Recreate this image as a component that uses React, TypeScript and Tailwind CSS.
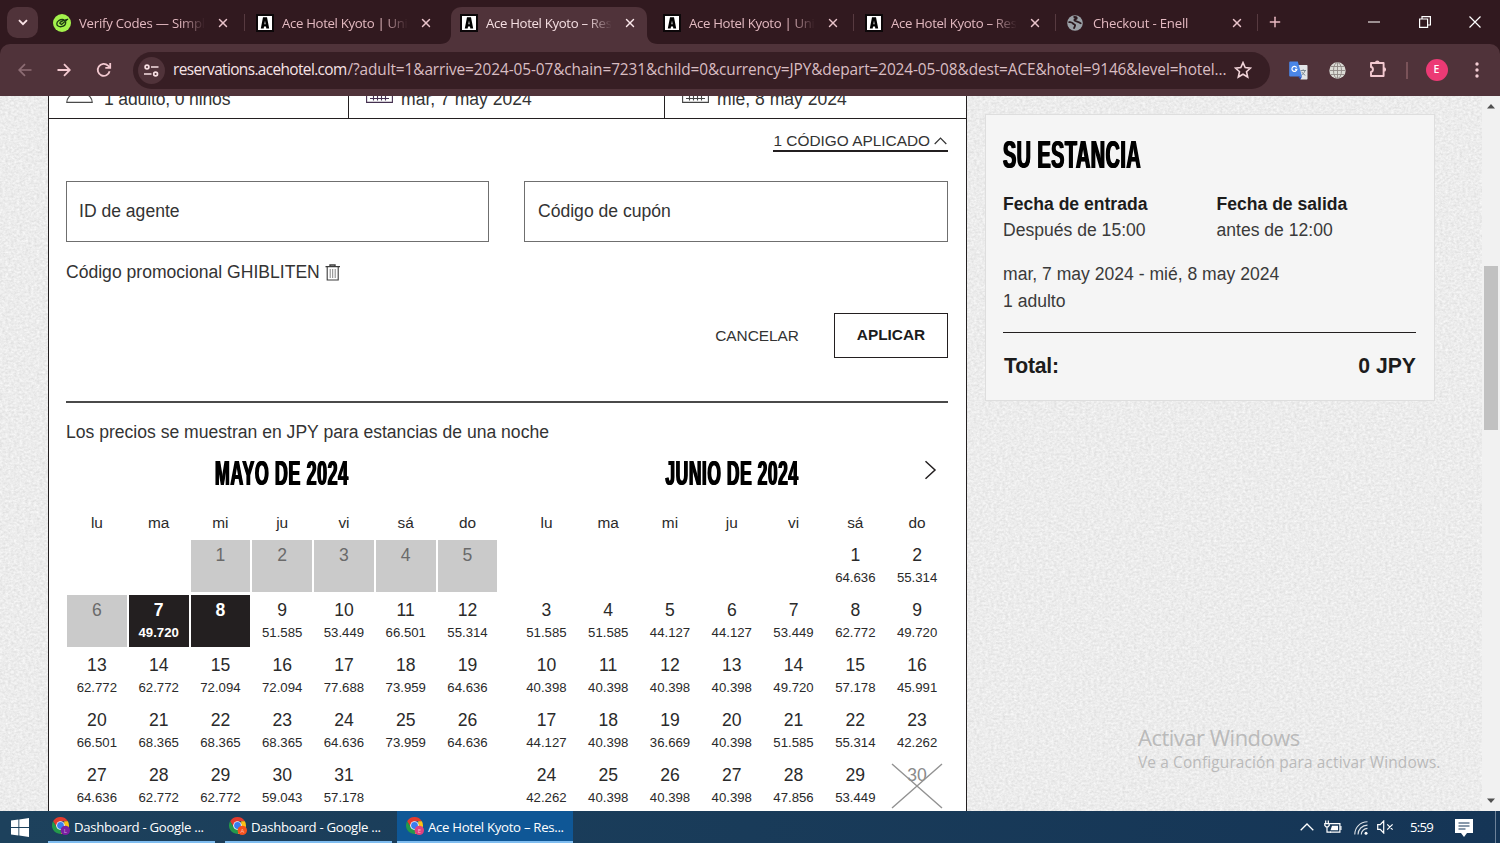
import React from 'react';
import { X, Plus } from 'lucide-react';

const SEGOE = "font-['Open_Sans','Noto_Sans',sans-serif]";

/* ---------- Icons ---------- */

function VerifyIcon() {
  return (
    <svg width="18" height="18" viewBox="0 0 18 18">
      <circle cx="9" cy="9" r="9" fill="#a4f24c" />
      <g fill="none" stroke="#1c3a12" strokeWidth="1.3" strokeLinecap="round" strokeLinejoin="round">
        <path d="M10.500 5.600C7 5 3.800 7.200 3.800 9.700c0 2 2 3.300 4.400 3 3-.4 4.600-2.600 4.500-4.700" />
        <path d="M6.800 9.300l1.700 1.300L14.600 5.300l-4.600 1.300-3 1.800" />
      </g>
    </svg>
  );
}

function AceIcon() {
  return (
    <svg width="18" height="18" viewBox="0 0 18 18">
      <rect width="18" height="18" fill="#0c0709" />
      <rect x="2" y="2" width="14" height="14" fill="#fff" />
      <path d="M7 3.200h4l2.200 11.300h-2.900l-.3-2.100H8l-.3 2.100H4.800zM9 6.400l-.6 3.800h1.200z" fill="#000" />
    </svg>
  );
}

function GlobeIcon() {
  return (
    <svg width="16" height="16" viewBox="0 0 16 16">
      <circle cx="8" cy="8" r="7.800" fill="#9aa0a6" />
      <path
        d="M6.500 2.200c1.800-.4 3.500 0 3.200 1-.2.900-1.800.7-2.200 1.500-.4.900.8 1.300 2 1.600 1.600.4 3.600 1 4.700 2.500M1.500 6.800c1.600.5 3.600.4 4.300 1.500.6 1 1.800.9 2.200 1.700.5 1.100-.9 1.800-1 3.800"
        fill="none"
        stroke="#2c1a1f"
        strokeWidth="1.900"
      />
    </svg>
  );
}

function TranslateIcon() {
  return (
    <svg width="19" height="19" viewBox="0 0 19 19">
      <path d="M8 4h9.500c.6 0 1 .4 1 1v12.500c0 .6-.4 1-1 1H11.500z" fill="#e3e5e8" />
      <path d="M11.500 9.500h5.500M14.200 8.300v1.200M16 9.700c-.6 2-2 3.600-3.600 4.600M12.700 10.800c.8 1.600 2 2.700 3.600 3.500" stroke="#7d8a94" strokeWidth="1" fill="none" />
      <path d="M1.200.5h7.600l4.200 15H1.200a1 1 0 0 1-1-1v-13a1 1 0 0 1 1-1z" fill="#4a86e8" />
      <path d="M9 15.500h4l-1.500 3z" fill="#2a56c6" />
      <path d="M7.600 6.600A2.500 2.500 0 1 0 7.900 8.400H6" stroke="#fff" strokeWidth="1.200" fill="none" />
    </svg>
  );
}

function GridGlobeIcon() {
  return (
    <svg width="17" height="17" viewBox="0 0 17 17">
      <circle cx="8.500" cy="8.500" r="8.200" fill="#dcdcd6" />
      <g fill="none" stroke="#8d8783" strokeWidth=".9">
        <ellipse cx="8.500" cy="8.500" rx="4" ry="8" />
        <path d="M8.500.5v16M.5 8.500h16M1.800 4.500h13.400M1.800 12.500h13.400" />
      </g>
    </svg>
  );
}

function PuzzleIcon() {
  return (
    <svg width="20" height="20" viewBox="0 0 20 20">
      <path
        d="M3 4h12.600v13H3v-4c2.600-.4 2.600-4.600 0-5z"
        fill="none"
        stroke="#f3c9d0"
        strokeWidth="1.900"
        strokeLinejoin="round"
      />
      <path d="M7 3.800a2.300 2.300 0 0 1 4.600 0zM15.800 8.200a2.300 2.300 0 0 1 0 4.600z" fill="#f3c9d0" />
    </svg>
  );
}

function ChromeIcon({ badge, letter }: { badge: string; letter: string }) {
  return (
    <svg width="20" height="20" viewBox="0 0 20 20">
      <path d="M8.500 0A8.500 8.500 0 0 1 15.900 4.300H8.500L4.900 10.600 1.100 4.300A8.500 8.500 0 0 1 8.500 0z" fill="#e33b2e" />
      <path d="M15.900 4.300A8.500 8.500 0 0 1 8.500 17l3.700-6.400V4.300z" fill="#fbc116" />
      <path d="M1.100 4.300A8.500 8.500 0 0 0 8.500 17l3.700-6.400H4.900z" fill="#24994a" />
      <circle cx="8.500" cy="8.500" r="4.300" fill="#fff" />
      <circle cx="8.500" cy="8.500" r="3.400" fill="#3a7ded" />
      <circle cx="13.300" cy="13.400" r="4.700" fill={badge} />
      <text x="13.300" y="15.500" fontSize="6" textAnchor="middle" fill="#fff" fillOpacity=".6" fontFamily="Open Sans">
        {letter}
      </text>
    </svg>
  );
}

function CalendarBottomIcon({ color }: { color: string }) {
  return (
    <svg width="27" height="24" viewBox="0 0 27 24" fill="none" stroke={color} strokeWidth="1.100">
      <path d="M.6 3.500h25.800v19.900H.6zM.6 9h25.800M4 19.500h19M4 15h19M7.500 11v10.500M11.500 11v10.500M15.500 11v10.500M19.500 11v10.500" />
    </svg>
  );
}

function PersonIcon() {
  return (
    <svg width="27" height="26" viewBox="0 0 27 26" fill="none" stroke="#4a4a4a" strokeWidth="1.200">
      <circle cx="13.500" cy="7" r="6" />
      <path d="M.8 25.300c0-4 3-8 8-8h9.400c5 0 8 4 8 8z" />
    </svg>
  );
}

function TrashIcon() {
  return (
    <svg width="16" height="17" viewBox="0 0 16 17" fill="none" stroke="#3c3c3c" strokeWidth="1.100">
      <path d="M.5 2.600h14.500M5 2.400V1h5v1.400" strokeWidth="1.400" />
      <path d="M2.200 3v13h11V3" />
      <path d="M5.200 5v9M7.700 5v9M10.200 5v9" stroke="#777" strokeWidth=".9" />
    </svg>
  );
}

/* ---------- Browser chrome ---------- */

interface TabInfo {
  title: string;
  icon: React.ReactNode;
  active?: boolean;
  divider?: boolean;
  style: string;
}

const tabs: TabInfo[] = [
  { title: 'Verify Codes — Simply', icon: <VerifyIcon />, divider: true, style: 'w-[203px] tracking-[-0.240px]' },
  { title: 'Ace Hotel Kyoto | Unit', icon: <AceIcon />, style: 'w-[204px] tracking-[-0.330px]' },
  { title: 'Ace Hotel Kyoto – Rese', icon: <AceIcon />, active: true, style: 'w-[203px] tracking-[-0.330px]' },
  { title: 'Ace Hotel Kyoto | Unit', icon: <AceIcon />, divider: true, style: 'w-[202px] tracking-[-0.330px]' },
  { title: 'Ace Hotel Kyoto – Rese', icon: <AceIcon />, divider: true, style: 'w-[202px] tracking-[-0.330px]' },
  { title: 'Checkout - Enell', icon: <GlobeIcon />, divider: true, style: 'w-[202px] tracking-[-0.200px]' },
];

function Tab({ tab }: { tab: TabInfo }) {
  return (
    <div className={`relative h-[44px] shrink-0 pt-[7px] ${tab.style}`}>
      {tab.active && (
        <svg className="absolute top-[7px] -left-[9px]" width="220" height="37" viewBox="0 0 220 37">
          <path d="M0 37c7 0 11-4 11-10V11C11 4 15 0 22 0h174c7 0 11 4 11 11v16c0 6 4 10 11 10z" fill="#50333a" />
        </svg>
      )}
      <div className="relative flex h-[32px] items-center pl-[11px]">
        <div className="flex w-[26px] items-center">{tab.icon}</div>
        <div
          className={`w-[125px] overflow-hidden text-[13.200px] leading-[20px] whitespace-nowrap [mask-image:linear-gradient(to_right,#000_101px,transparent_126px)] ${
            tab.active ? 'text-[#f5dfe2]' : 'text-[#e3b9c0]'
          }`}
        >
          {tab.title}
        </div>
        <X className={`ml-[12px] ${tab.active ? 'text-[#fbe9eb]' : 'text-[#e9c3ca]'}`} size={14} strokeWidth={2.5} />
      </div>
      {tab.divider && <div className="absolute top-[14px] right-[0px] h-[17px] w-[1.500px] bg-[#573a40]" />}
    </div>
  );
}

function TabStrip() {
  return (
    <div className="flex h-[44px] items-start bg-[#31191f]">
      <div className="w-[42px] shrink-0 pt-[7px] pl-[7px]">
        <div className="flex h-[31px] w-[31px] items-center justify-center rounded-[10px] bg-[#50333a]">
          <svg width="10" height="7" viewBox="0 0 10 7" fill="none" stroke="#fbe4e7" strokeWidth="1.900">
            <path d="M1 1.200l4 4 4-4" />
          </svg>
        </div>
      </div>
      {tabs.map((t, i) => (
        <Tab key={i} tab={t} />
      ))}
      <div className="flex h-[44px] flex-1 items-center">
        <Plus className="ml-[9px] text-[#e9b9c2]" size={16} strokeWidth={2.2} />
        <div className="ml-auto flex items-center text-white">
          <svg width="12" height="2" viewBox="0 0 12 2">
            <path d="M0 1h12" stroke="#e6dfe0" strokeWidth="1.200" />
          </svg>
          <svg className="ml-[39px]" width="12" height="12" viewBox="0 0 12 12" fill="none" stroke="#fff" strokeWidth="1.200">
            <path d="M.6 3h8v8.400h-8zM3 3V.6h8.400V9H8.800" />
          </svg>
          <svg className="mr-[19px] ml-[38px]" width="12" height="12" viewBox="0 0 12 12" fill="none" stroke="#fff" strokeWidth="1.200">
            <path d="M.5.5l11 11M11.500.5l-11 11" />
          </svg>
        </div>
      </div>
    </div>
  );
}

function Toolbar() {
  return (
    <div className="bg-[#31191f]">
      <div className="flex h-[52px] items-center rounded-t-[10px] bg-[#50333a]">
        <svg className="ml-[18px]" width="14" height="14" viewBox="0 0 14 14" fill="none" stroke="#8d6d74" strokeWidth="1.700">
          <path d="M13.500 7H1.500M7 1.200L1.200 7 7 12.800" />
        </svg>
        <svg className="ml-[25px]" width="14" height="14" viewBox="0 0 14 14" fill="none" stroke="#f3c9d0" strokeWidth="1.800">
          <path d="M.5 7h12M7 1.200L12.800 7 7 12.800" />
        </svg>
        <svg className="ml-[25px]" width="16" height="16" viewBox="0 0 16 16" fill="none" stroke="#f3c9d0" strokeWidth="1.800">
          <path d="M13.600 9.200A6 6 0 1 1 12 3.600l1.600 1.600" />
          <path d="M14.200 1v4.900H9.300" />
        </svg>
        <div className="ml-[21px] flex h-[37px] w-[1137px] items-center rounded-full bg-[#371e24]">
          <div className="ml-[5px] flex h-[27px] w-[27px] items-center justify-center rounded-full bg-[#50333a]">
            <svg width="15" height="13" viewBox="0 0 15 13" fill="none" stroke="#f6dfe2" strokeWidth="1.700">
              <circle cx="3" cy="3" r="1.900" />
              <path d="M7 3h7.500M0 10h7.500" />
              <circle cx="11.600" cy="10" r="1.900" />
            </svg>
          </div>
          <div className="ml-[8px] flex w-[1055px] text-[15.400px] leading-[22px] whitespace-nowrap">
            <span className="w-[174.500px] shrink-0 tracking-[-0.620px] text-[#f6e3e6]">reservations.acehotel.com</span>
            <span className="tracking-[-0.100px] text-[#d9bdc2]">
              /?adult=1&amp;arrive=2024-05-07&amp;chain=7231&amp;child=0&amp;currency=JPY&amp;depart=2024-05-08&amp;dest=ACE&amp;hotel=9146&amp;level=hotel...
            </span>
          </div>
          <svg className="ml-[6px]" width="18" height="18" viewBox="0 0 18 18" fill="none" stroke="#f0d3d8" strokeWidth="1.600">
            <path d="M9 1.600l2.200 5 5.300.5-4 3.600 1.200 5.300L9 13.200 4.300 16l1.200-5.300-4-3.600 5.300-.5z" />
          </svg>
        </div>
        <div className="ml-[19px] flex items-center">
          <TranslateIcon />
          <div className="ml-[21px]">
            <GridGlobeIcon />
          </div>
          <div className="-mt-[2px] ml-[22px]">
            <PuzzleIcon />
          </div>
          <div className="ml-[18px] h-[17px] w-[1.500px] bg-[#7a5359]" />
          <div className="ml-[18px] flex h-[22px] w-[22px] items-center justify-center rounded-full bg-[#ec3a75] text-[10.500px] font-semibold text-white">
            E
          </div>
          <svg className="ml-[27px]" width="4" height="16" viewBox="0 0 4 16" fill="#f3cdd3">
            <circle cx="2" cy="2" r="1.700" />
            <circle cx="2" cy="8" r="1.700" />
            <circle cx="2" cy="14" r="1.700" />
          </svg>
        </div>
      </div>
    </div>
  );
}

/* ---------- Calendar ---------- */

interface Day {
  n: number;
  price?: string;
  kind?: 'past' | 'selected' | 'crossed';
}

const weekdays = ['lu', 'ma', 'mi', 'ju', 'vi', 'sá', 'do'];

const mayPrices =
  '51.585 53.449 66.501 55.314 62.772 62.772 72.094 72.094 77.688 73.959 64.636 66.501 68.365 68.365 68.365 64.636 73.959 64.636 64.636 62.772 62.772 59.043 57.178'.split(' ');
const may: Day[] = [
  ...[1, 2, 3, 4, 5, 6].map((n): Day => ({ n, kind: 'past' })),
  { n: 7, price: '49.720', kind: 'selected' },
  { n: 8, kind: 'selected' },
  ...mayPrices.map((price, i): Day => ({ n: i + 9, price })),
];

const junePrices =
  '64.636 55.314 51.585 51.585 44.127 44.127 53.449 62.772 49.720 40.398 40.398 40.398 40.398 49.720 57.178 45.991 44.127 40.398 36.669 40.398 51.585 55.314 42.262 42.262 40.398 40.398 40.398 47.856 53.449'.split(' ');
const june: Day[] = [...junePrices.map((price, i): Day => ({ n: i + 1, price })), { n: 30, kind: 'crossed' }];

function DayCell({ day }: { day: Day }) {
  const tone =
    day.kind === 'past'
      ? 'bg-[#cacaca] text-[#6a6a6a]'
      : day.kind === 'selected'
        ? 'bg-[#231f20] text-white font-bold'
        : day.kind === 'crossed'
          ? 'text-[#8a8a8a]'
          : 'text-[#2a2a2a]';
  return (
    <div className="h-[55px] p-[1px] pb-[2px]">
      <div className={`relative flex h-[52px] flex-col items-center pt-[5px] ${tone}`}>
        <span className="text-[17.570px] leading-[21px]">{day.n}</span>
        <span className="mt-[3px] text-[13.200px] leading-[18px]">{day.price}</span>
        {day.kind === 'crossed' && (
          <svg className="absolute top-[3px] left-[4px]" width="52" height="46" viewBox="0 0 52 46" stroke="#929292" strokeWidth="1.400">
            <path d="M1 1l50 44M51 1L1 45" />
          </svg>
        )}
      </div>
    </div>
  );
}

function Month({ title, scale, days, offset, hasNext }: { title: string; scale: string; days: Day[]; offset: number; hasNext?: boolean }) {
  return (
    <div className="w-[432.400px] shrink-0">
      <div className="relative flex h-[40px] items-center justify-center">
        <h2
          className={`text-[35.500px] leading-[40px] font-bold tracking-[1.200px] whitespace-nowrap text-black [text-shadow:1.200px_0_0_#000,-1.200px_0_0_#000] ${scale}`}
        >
          {title}
        </h2>
        {hasNext && (
          <svg className="absolute top-[7px] right-[11px]" width="13" height="20" viewBox="0 0 13 20" fill="none" stroke="#231f20" strokeWidth="1.500">
            <path d="M1.500 1.200L11 10l-9.500 8.800" />
          </svg>
        )}
      </div>
      <div className="mt-[20px] grid grid-cols-7 text-center text-[15.400px] leading-[20px] text-[#2a2a2a]">
        {weekdays.map((d) => (
          <div key={d}>{d}</div>
        ))}
      </div>
      <div className="mt-[6px] grid grid-cols-7">
        {Array.from({ length: offset }, (_, i) => (
          <div key={`e${i}`} />
        ))}
        {days.map((d) => (
          <DayCell key={d.n} day={d} />
        ))}
      </div>
    </div>
  );
}

/* ---------- Booking panel ---------- */

function BookingPanel() {
  return (
    <main className="h-[715px] w-[919px] shrink-0 overflow-hidden border-x border-[#231f20] bg-white text-[17.570px] text-[#333]">
      <div className="flex h-[23px] items-end overflow-hidden border-b border-[#231f20]">
        <div className="flex h-[60px] w-[300px] shrink-0 items-end border-r border-[#231f20] pb-[8px] pl-[17px]">
          <div className="pb-[7px]">
            <PersonIcon />
          </div>
          <span className="ml-[11px] leading-[22px] tracking-[-0.150px]">1 adulto, 0 niños</span>
        </div>
        <div className="flex h-[60px] w-[316px] shrink-0 items-end border-r border-[#231f20] pb-[8px] pl-[17px]">
          <div className="pb-[7px]">
            <CalendarBottomIcon color="#44304f" />
          </div>
          <span className="ml-[8px] leading-[22px]">mar, 7 may 2024</span>
        </div>
        <div className="flex h-[60px] flex-1 items-end pb-[8px] pl-[17px]">
          <div className="pb-[7px]">
            <CalendarBottomIcon color="#444" />
          </div>
          <span className="ml-[8px] leading-[22px]">mié, 8 may 2024</span>
        </div>
      </div>

      <div className="flex flex-col pr-[18px] pl-[17px]">
        <div className="mt-[12px] flex h-[21px] items-center self-end border-b-2 border-[#231f20] text-[15.400px] leading-[20px]">
          <span>1 CÓDIGO APLICADO</span>
          <svg className="mr-[1px] ml-[4px]" width="13" height="8" viewBox="0 0 13 8" fill="none" stroke="#333" strokeWidth="1.200">
            <path d="M.7 7l5.800-5.800L12.300 7" />
          </svg>
        </div>

        <div className="mt-[29px] grid grid-cols-[423px_424px] gap-[35px]">
          <div className="flex h-[61px] items-center border border-[#6f6f6f] pl-[12px]">ID de agente</div>
          <div className="flex h-[61px] items-center border border-[#6f6f6f] pl-[13px]">Código de cupón</div>
        </div>

        <div className="mt-[17px] flex h-[26px] items-center">
          <span>Código promocional GHIBLITEN</span>
          <div className="ml-[5px]">
            <TrashIcon />
          </div>
        </div>

        <div className="mt-[27px] flex h-[46px] items-center justify-end text-[15.400px]">
          <button className="mr-[35px] pt-[1px]">CANCELAR</button>
          <button className="h-[45px] w-[114px] border border-[#231f20] font-bold text-[#1c1c1c]">APLICAR</button>
        </div>

        <div className="mt-[43px] h-[1.500px] bg-[#4a4a4a]" />

        <p className="mt-[16.500px] leading-[26px]">Los precios se muestran en JPY para estancias de una noche</p>

        <div className="mt-[8px] flex gap-[17.200px]">
          <Month title="MAYO DE 2024" scale="scale-x-[0.504]" days={may} offset={2} />
          <Month title="JUNIO DE 2024" scale="scale-x-[0.490]" days={june} offset={5} hasNext />
        </div>
      </div>
    </main>
  );
}

/* ---------- Stay summary ---------- */

function StaySummary() {
  return (
    <aside className="mt-[18px] ml-[17.500px] h-[287px] w-[450px] shrink-0 border border-[#dedede] bg-[#f5f5f5] px-[17.500px] text-[17.570px] leading-[26.400px] text-[#3a3a3a]">
      <div className="mt-[17px] flex h-[46px] items-center">
        <h2 className="origin-left scale-x-[0.507] text-[39px] leading-[46px] font-bold tracking-[1px] whitespace-nowrap text-black [text-shadow:1.300px_0_0_#000,-1.300px_0_0_#000]">
          SU ESTANCIA
        </h2>
      </div>
      <div className="mt-[13px] flex">
        <div className="w-[213.500px]">
          <div className="font-bold text-[#1c1c1c]">Fecha de entrada</div>
          <div>Después de 15:00</div>
        </div>
        <div>
          <div className="font-bold text-[#1c1c1c]">Fecha de salida</div>
          <div>antes de 12:00</div>
        </div>
      </div>
      <div className="mt-[17.500px]">mar, 7 may 2024 - mié, 8 may 2024</div>
      <div>1 adulto</div>
      <div className="mt-[17.500px] flex justify-between border-t border-[#231f20] pt-[20px] text-[21.200px] font-bold text-[#1c1c1c]">
        <span className="pl-px tracking-[-0.200px]">Total:</span>
        <span>0 JPY</span>
      </div>
    </aside>
  );
}

function Paper() {
  return (
    <svg className="absolute inset-0 h-full w-full" aria-hidden>
      <filter id="grain" x="0" y="0" width="100%" height="100%" colorInterpolationFilters="sRGB">
        <feTurbulence type="fractalNoise" baseFrequency="0.35 0.45" numOctaves="3" seed="4" />
        <feColorMatrix values="0.14 0 0 0 0.855  0.14 0 0 0 0.855  0.14 0 0 0 0.855  0 0 0 0 1" />
      </filter>
      <rect width="100%" height="100%" fill="#ececec" filter="url(#grain)" />
    </svg>
  );
}

function PageView() {
  return (
    <div className="relative h-[715px] overflow-hidden bg-[#ececec] font-['Liberation_Sans',Arial,sans-serif]">
      <Paper />
      <div className="relative flex h-full">
        <div className="w-[48px] shrink-0" />
        <BookingPanel />
        <StaySummary />
        <div className="ml-auto flex h-full w-[18px] flex-col items-center bg-[#f1f1f1]">
          <svg className="mt-[7px]" width="8" height="6" viewBox="0 0 8 6">
            <path d="M0 5.500L4 1l4 4.500z" fill="#505050" />
          </svg>
          <div className="mt-[157px] h-[164px] w-[14px] bg-[#c1c1c1]" />
          <svg className="mt-auto mb-[7px]" width="8" height="6" viewBox="0 0 8 6">
            <path d="M0 .5L4 5l4-4.500z" fill="#505050" />
          </svg>
        </div>
      </div>
      <div className={`absolute top-[626px] left-[1138px] whitespace-nowrap text-[#bababa] ${SEGOE}`}>
        <div className="text-[22px] leading-[30px] tracking-[-0.500px]">Activar Windows</div>
        <div className="text-[15.400px] leading-[21px] tracking-[0.150px]">Ve a Configuración para activar Windows.</div>
      </div>
    </div>
  );
}

/* ---------- Taskbar ---------- */

function TaskItem({ label, badge, letter, active, className }: { label: string; badge: string; letter: string; active?: boolean; className: string }) {
  return (
    <div
      className={`flex h-[32px] shrink-0 items-center border-b-2 border-[#7fbdf0] ${active ? 'bg-[#0f5796] pl-[9px]' : 'pl-[4px]'} ${className}`}
    >
      <div className="w-[22px] shrink-0 pt-[2px]">
        <ChromeIcon badge={badge} letter={letter} />
      </div>
      <span className="pt-px text-[13.200px] leading-[20px] tracking-[-0.300px] whitespace-nowrap text-white">{label}</span>
    </div>
  );
}

function Taskbar() {
  return (
    <div className={`flex h-[32px] items-center bg-gradient-to-r from-[#1d415c] to-[#153556] ${SEGOE}`}>
      <svg className="ml-[11px]" width="18" height="19" viewBox="0 0 18 19" fill="#fff">
        <path d="M0 2.600l7.400-1v7.500H0zM8.300 1.400L18 0v9.100H8.300zM0 9.900h7.400v7.500l-7.400-1zM8.300 9.900H18V19l-9.700-1.400z" />
      </svg>
      <TaskItem className="ml-[19px] w-[167px]" label="Dashboard - Google ..." badge="#7b1fa2" letter="L" />
      <TaskItem className="ml-[10px] w-[167px]" label="Dashboard - Google ..." badge="#f4511e" letter="A" />
      <TaskItem className="ml-[5px] w-[176px]" label="Ace Hotel Kyoto – Res..." badge="#e0407f" letter="E" active />
      <div className="ml-auto flex h-[32px] items-center text-white">
        <svg width="14" height="8" viewBox="0 0 14 8" fill="none" stroke="#fff" strokeWidth="1.300">
          <path d="M.7 7.300L7 1l6.300 6.300" />
        </svg>
        <svg className="ml-[10px]" width="18" height="14" viewBox="0 0 18 14" fill="none" stroke="#fff" strokeWidth="1.200">
          <path d="M5.500 3.600h10.400v8.600H6" />
          <path d="M8 5.700h6v4.600H6.500z" fill="#fff" stroke="none" />
          <path d="M16.900 6v4M1.700.6v2.600M4.300.6v2.600M.8 3.600h4.400v1.800L3.900 6.800H2.100L.8 5.400zM3 7v5.200h4" />
        </svg>
        <svg className="mt-[2px] ml-[12px]" width="14" height="14" viewBox="0 0 14 14" fill="none" stroke="#fff" strokeWidth="1.100">
          <path d="M.8 13.500C.8 6.500 6 1 13.500.8M4 13.500C4 8.500 8 4.300 13.500 4.100M7.300 13.500c0-3.300 2.700-6 6.200-6.100" opacity=".85" />
          <circle cx="12" cy="12.200" r="1.500" fill="#fff" stroke="none" />
        </svg>
        <svg className="ml-[9px]" width="17" height="14" viewBox="0 0 17 14" fill="none" stroke="#fff" strokeWidth="1.200">
          <path d="M.7 4.600h2.500L6.700 1v12L3.200 9.400H.7zM10.200 4.300l5.400 5.400M15.600 4.300l-5.400 5.400" />
        </svg>
        <span className="ml-[16px] w-[24px] pt-px text-[13.200px] tracking-[-0.800px]">5:59</span>
        <svg className="mt-[2px] ml-[21px]" width="18" height="18" viewBox="0 0 18 18">
          <path d="M0 0h18v14h-6L9 18l-3-4H0z" fill="#fff" />
          <path d="M3.500 4h11M3.500 7h11M3.500 10h7" stroke="#153556" strokeWidth="1.200" />
        </svg>
        <div className="mr-[4px] ml-[22px] h-[32px] w-px bg-[#6d8299]" />
      </div>
    </div>
  );
}

export default function App() {
  return (
    <div className={`h-[843px] w-[1500px] overflow-hidden ${SEGOE}`}>
      <TabStrip />
      <Toolbar />
      <PageView />
      <Taskbar />
    </div>
  );
}
